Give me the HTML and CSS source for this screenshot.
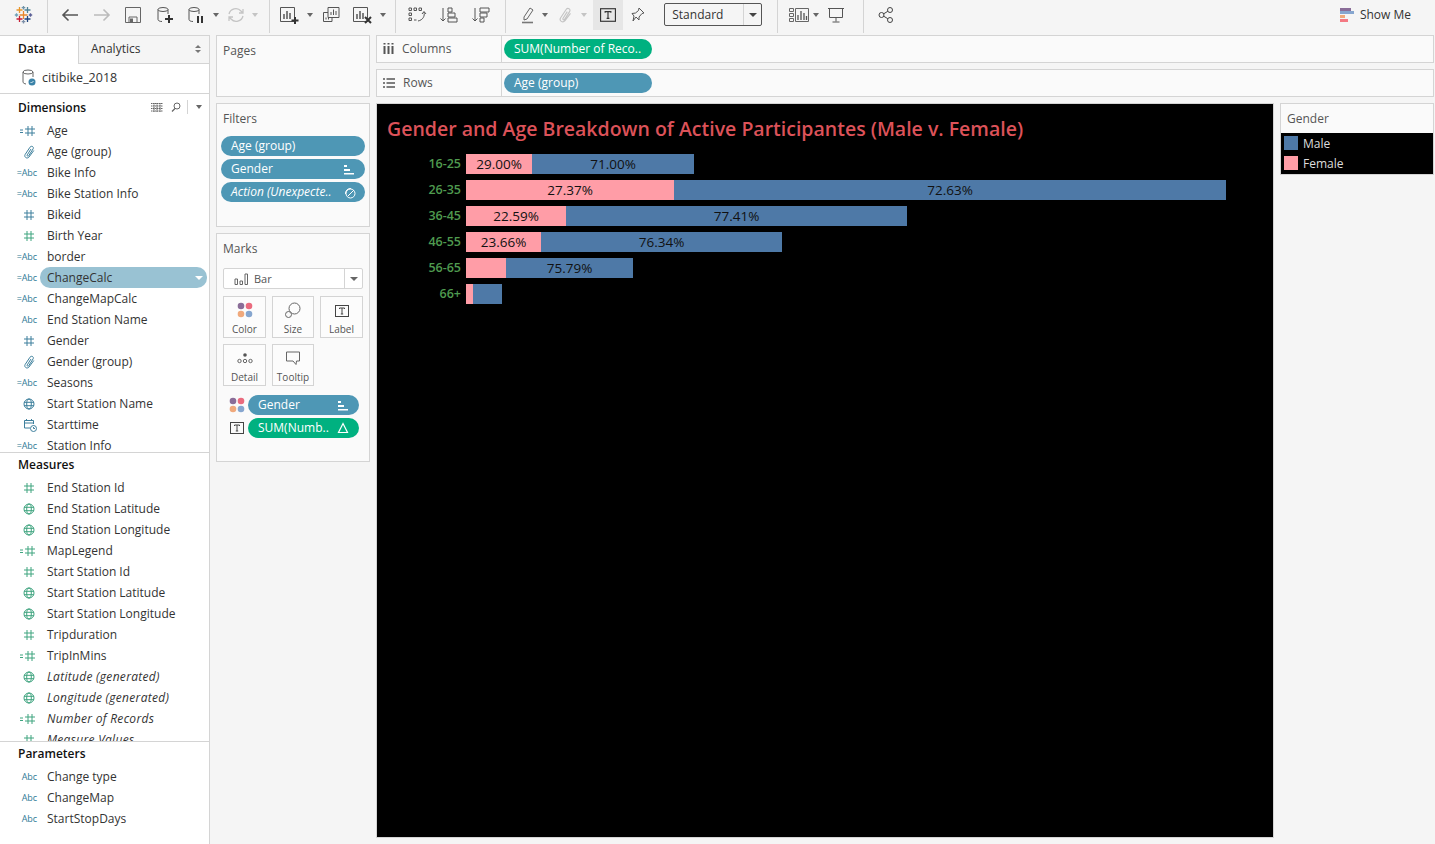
FILE: index.html
```html
<!DOCTYPE html>
<html lang="en">
<head>
    <meta charset="UTF-8">
    <title>Tableau - citibike_2018</title>
    <link rel="stylesheet" href="styles.css">
</head>
<body>
    <svg class="defs" width="0" height="0">
        <symbol id="hash" viewBox="0 0 12 12"><path d="M4 1v10M8 1v10M1 4h10M1 8h10" fill="none" stroke="currentColor"/></symbol>
        <symbol id="calchash" viewBox="0 0 15 12"><path d="M0 5h3M0 7.500h3M8 1v10M12 1v10M5 4h10M5 8h10" fill="none" stroke="currentColor"/></symbol>
        <symbol id="clip" viewBox="0 0 12 14"><path d="M8 4L4.300 9.800C3.600 11 5 11.800 5.800 10.600L10 4C11.400 1.800 8.400.2 7 2.200L2.200 9.400C.6 12 4 14.400 6 12L10.800 5.500" fill="none" stroke="currentColor"/></symbol>
        <symbol id="globe" viewBox="0 0 12 12"><g fill="none" stroke="currentColor"><circle cx="6" cy="6" r="5"/><ellipse cx="6" cy="6" rx="2.300" ry="5"/><path d="M1 4.300h10M1 7.700h10"/></g></symbol>
        <symbol id="cal" viewBox="0 0 14 14"><g fill="none" stroke="currentColor"><path d="M7 10H1.500V2.500h9V6M3.500 1v2M8.500 1v2M1.500 5h9"/><circle cx="10.500" cy="10.500" r="3"/><path d="M10.500 9v1.500h1.500"/></g></symbol>
        <symbol id="tbox" viewBox="0 0 14 14"><g fill="none" stroke="currentColor"><rect x=".5" y="1.500" width="13" height="11"/><path d="M4.500 5V4h5v1M7 4v6M5.800 10h2.400"/></g></symbol>
        <symbol id="sortbars" viewBox="0 0 12 12"><path d="M1 2h3v2H1zM1 6h6v2H1zM1 10h10v1.500H1z" fill="currentColor"/></symbol>
        <symbol id="dots" viewBox="0 0 16 16"><circle cx="4" cy="4" r="3.300" fill="#8a6d98"/><circle cx="12" cy="4" r="3.300" fill="#ea6b7e"/><circle cx="4" cy="12" r="3.300" fill="#f0a97c"/><circle cx="12" cy="12" r="3.300" fill="#86a6cf"/></symbol>
    </svg>

    <div class="toolbar">
        <div class="tgroup g-logo">
            <svg width="18" height="18" viewBox="0 0 18 18" fill="none" stroke-width="1.300">
                <path d="M8.500 5v8M4.500 9h8" stroke="#e8862b"/>
                <path d="M4.500 1v6M1.500 4h6" stroke="#e8962b"/>
                <path d="M12.500 1v6M9.500 4h6" stroke="#4f8296"/>
                <path d="M4.500 10v6M1.500 13h6" stroke="#c72037"/>
                <path d="M12.500 10v6M9.500 13h6" stroke="#1f447d"/>
                <path d="M8.500 0v3.500M6.700 1.700h3.600" stroke="#6f93a8"/>
                <path d="M8.500 14v3.500M6.700 15.700h3.600" stroke="#7c8fa8"/>
                <path d="M1.500 7.200v3.600M-.2 9h3.400" stroke="#6fa0b8"/>
                <path d="M15.500 7.200v3.600M13.800 9h3.400" stroke="#5a5f96"/>
            </svg>
        </div>
        <div class="tgroup g-nav">
            <span class="tool"><svg width="18" height="14" viewBox="0 0 18 14"><path d="M17 7H2M7.500 1.500L2 7l5.500 5.500" fill="none" stroke="#555" stroke-width="1.600"/></svg></span>
            <span class="tool"><svg width="18" height="14" viewBox="0 0 18 14"><path d="M1 7h15M10.500 1.500L16 7l-5.500 5.500" fill="none" stroke="#bbb" stroke-width="1.600"/></svg></span>
            <span class="tool"><svg width="16" height="16" viewBox="0 0 16 16"><path d="M.5.500h15v15H.5zM4 15.500V10h8v5.500" fill="none" stroke="#666"/><path d="M5 11.500h3V15H5z" fill="#666"/></svg></span>
            <span class="tool"><svg width="18" height="18" viewBox="0 0 18 18"><g fill="none" stroke="#555"><ellipse cx="7" cy="3.500" rx="5" ry="2"/><path d="M2 3.500v10c0 1 1.500 2 4 2M12 3.500V8"/></g><path d="M13 9v8M9 13h8" stroke="#333" stroke-width="2"/></svg></span>
            <span class="tool"><svg width="18" height="18" viewBox="0 0 18 18"><g fill="none" stroke="#555"><ellipse cx="7" cy="3.500" rx="5" ry="2"/><path d="M2 3.500v10c0 1 1.500 2 4 2M12 3.500V8"/></g><path d="M10 10h2v7h-2zM14 10h2v7h-2z" fill="#333"/></svg></span>
            <span class="caret"></span>
            <span class="tool"><svg width="18" height="16" viewBox="0 0 18 16"><path d="M2 7a7 7 0 0 1 12-3l2 2M16 9a7 7 0 0 1-12 3l-2-2M16 2v4h-4M2 14v-4h4" fill="none" stroke="#c4c4c4" stroke-width="1.300"/></svg></span>
            <span class="caret off"></span>
        </div>
        <div class="tgroup g-sheet">
            <span class="tool"><svg width="20" height="20" viewBox="0 0 20 20"><path d="M.5 2.500h14v14H.5z" fill="none" stroke="#555"/><path d="M4 14V9M7 14V6M10 14V8" stroke="#555" stroke-width="1.500"/><path d="M15 12v7M11.500 15.500h7" stroke="#333" stroke-width="2"/></svg></span>
            <span class="caret"></span>
            <span class="tool dup"><svg width="18" height="18" viewBox="0 0 18 18"><g fill="none" stroke="#555"><path d="M6 1.500h11v10H6z"/><path d="M6 6.500H1.500v9H10V11.500"/><path d="M9 9V6M11.500 9V3.500M14 9V5M4 13.500v-2M6.500 13.500V12"/></g></svg></span>
            <span class="tool dup"><svg width="20" height="20" viewBox="0 0 20 20"><path d="M.5 2.500h14v14H.5z" fill="none" stroke="#555"/><path d="M4 14V9M7 14V6M10 14V8" stroke="#555" stroke-width="1.500"/><path d="M12 12l6 6M18 12l-6 6" stroke="#333" stroke-width="2"/></svg></span>
            <span class="caret"></span>
        </div>
        <div class="tgroup g-sort">
            <span class="tool"><svg width="18" height="16" viewBox="0 0 18 16"><g fill="none" stroke="#555"><path d="M1 1h2.500v2.500H1zM6 1h2.500v2.500H6zM11 1h2.500v2.500H11zM1 6h2.500v2.500H1zM1 11h2.500v2.500H1zM6 13h2.500M16 5c1 4-1 8-6 9"/><path d="M14 7l2-2.500L18 7"/></g></svg></span>
            <span class="tool"><svg width="18" height="16" viewBox="0 0 18 16"><g fill="none" stroke="#555"><path d="M3 1v13M.5 11.500L3 14l2.500-2.500M8 1h4v4H8zM8 6h7v4H8zM8 11h9v4H8z"/></g></svg></span>
            <span class="tool dup"><svg width="18" height="16" viewBox="0 0 18 16"><g fill="none" stroke="#555"><path d="M3 1v13M.5 11.500L3 14l2.500-2.500M8 1h9v4H8zM8 6h7v4H8zM8 11h4v4H8z"/></g></svg></span>
        </div>
        <div class="tgroup g-mark">
            <span class="tool"><svg width="14" height="18" viewBox="0 0 14 18"><path d="M3 11l6-9 3 2-6 9-3 1z" fill="none" stroke="#666"/><path d="M1 16.500h11" stroke="#777" stroke-width="1.600"/></svg></span>
            <span class="caret tight"></span>
            <span class="tool"><svg width="14" height="16" color="#c4c4c4"><use href="#clip"/></svg></span>
            <span class="caret off"></span>
            <span class="tool tbtn"><svg width="16" height="16" color="#333"><use href="#tbox"/></svg></span>
            <span class="tool pin"><svg width="14" height="16" viewBox="0 0 14 16"><path d="M8 1l5 5-2 .5-3 3.500v3L5 10l-3 4 1-5-2-2.500 3.500-.5 3-2.500z" fill="none" stroke="#555"/></svg></span>
            <span class="select">Standard<i></i></span>
        </div>
        <div class="tgroup g-view">
            <span class="tool"><svg width="20" height="14" viewBox="0 0 20 14"><g fill="none" stroke="#666"><path d="M.5.500h4v3h-4zM.5 5.500h4v3h-4zM.5 10.500h4v3h-4zM6.500.500h13v13h-13z"/></g><path d="M9 12V7M12 12V3M15 12V5M17.500 12V8" stroke="#555" stroke-width="1.300"/></svg></span>
            <span class="caret tight"></span>
            <span class="tool"><svg width="18" height="16" viewBox="0 0 18 16"><path d="M1 1.500h16M2.500 1.500v9h13v-9M9 10.500v4M5.500 15h7" fill="none" stroke="#555"/></svg></span>
        </div>
        <div class="tgroup g-share">
            <span class="tool"><svg width="16" height="16" viewBox="0 0 16 16"><g fill="none" stroke="#444"><circle cx="3.500" cy="8" r="2.500"/><circle cx="12" cy="3" r="2.500"/><circle cx="12" cy="13" r="2.500"/><path d="M5.700 6.800l4.100-2.500M5.700 9.200l4.100 2.500"/></g></svg></span>
        </div>
        <div class="showme">
            <svg width="14" height="16" viewBox="0 0 14 16"><path d="M0 1h11v3H0z" fill="#8a6d98"/><path d="M0 4h14v3H0z" fill="#86a6cf"/><path d="M0 8h5v3H0z" fill="#f0a97c"/><path d="M0 12h8v3H0z" fill="#f47983"/></svg>
            <span>Show Me</span>
        </div>
    </div>

    <div class="workspace">
        <div class="sidebar">
            <div class="tabs">
                <div class="tab active">Data</div>
                <div class="tab">Analytics<i class="updown"></i></div>
            </div>
            <div class="source">
                <svg width="14" height="17" viewBox="0 0 14 17"><g fill="none" stroke="#666"><ellipse cx="6" cy="3" rx="5" ry="2"/><path d="M1 3v10c0 1 1.500 1.800 3 2M11 3v5"/></g><circle cx="10" cy="13" r="3.500" fill="#3b83a8"/><path d="M8.500 13l1 1 2-2" fill="none" stroke="#fff" stroke-width=".8"/></svg>
                <span>citibike_2018</span>
            </div>
            <div class="sec-dim">
                <div class="sec-head">Dimensions
                    <span class="sec-tools">
                        <svg width="12" height="9" viewBox="0 0 12 9"><path d="M0 .5h12M0 3h12M0 5.500h12M0 8h12M3 0v9M6 0v9M9 0v9" stroke="#666" stroke-dasharray="1.500 .5" fill="none"/></svg>
                        <svg width="10" height="10" viewBox="0 0 10 10"><circle cx="6" cy="4" r="3" fill="none" stroke="#666"/><path d="M4 6.500L1 9.500" stroke="#666" stroke-width="1.300"/></svg>
                        <span class="sep"></span>
                        <i class="caret-i"></i>
                    </span>
                </div>
                <div class="fields" id="dims"></div>
            </div>
            <div class="sec-mea">
                <div class="sec-head">Measures</div>
                <div class="fields" id="meas"></div>
            </div>
            <div class="sec-par">
                <div class="sec-head">Parameters</div>
                <div class="fields" id="pars"></div>
            </div>
        </div>

        <div class="cards">
            <div class="card card-pages"><div class="card-title">Pages</div></div>
            <div class="card card-filters">
                <div class="card-title">Filters</div>
                <div class="pill blue">Age (group)</div>
                <div class="pill blue">Gender<svg width="12" height="12" color="#fff"><use href="#sortbars"/></svg></div>
                <div class="pill blue ital">Action (Unexpecte..<svg width="13" height="13" viewBox="0 0 13 13"><g fill="none" stroke="#fff"><circle cx="7.500" cy="7.500" r="4.500"/><path d="M5 10l6-6M2.500 8A5 5 0 0 1 8 2.500"/></g></svg></div>
            </div>
            <div class="card card-marks">
                <div class="card-title">Marks</div>
                <div class="marktype">
                    <svg width="14" height="12" viewBox="0 0 14 12"><path d="M1 6h2.500v5.500H1zM6 8h2.500v3.500H6zM11 1h2.500v10.500H11z" fill="none" stroke="#666"/></svg>
                    <span>Bar</span><i></i>
                </div>
                <div class="markgrid">
                    <div class="markbtn"><svg width="16" height="16"><use href="#dots"/></svg>Color</div>
                    <div class="markbtn"><svg width="16" height="16" viewBox="0 0 16 16"><g fill="none" stroke="#666"><circle cx="9.500" cy="6.500" r="5.500"/><circle cx="3.500" cy="12.500" r="3" fill="#fafafa"/></g></svg>Size</div>
                    <div class="markbtn"><svg width="14" height="14" color="#444"><use href="#tbox"/></svg>Label</div>
                    <div class="markbtn"><svg width="16" height="16" viewBox="0 0 16 16"><circle cx="8" cy="5" r="1.800" fill="#555"/><g fill="none" stroke="#666"><circle cx="2.500" cy="11" r="1.700"/><circle cx="8" cy="11" r="1.700"/><circle cx="13.500" cy="11" r="1.700"/></g></svg>Detail</div>
                    <div class="markbtn"><svg width="16" height="16" viewBox="0 0 16 16"><path d="M1.500 2h13v9h-3l-.5 3.500L8 11H1.500z" fill="none" stroke="#666"/></svg>Tooltip</div>
                </div>
                <div class="markrow">
                    <svg width="16" height="16"><use href="#dots"/></svg>
                    <div class="pill blue">Gender<svg width="12" height="12" color="#fff"><use href="#sortbars"/></svg></div>
                </div>
                <div class="markrow">
                    <svg width="14" height="14" color="#444"><use href="#tbox"/></svg>
                    <div class="pill green">SUM(Numb..<svg width="12" height="12" viewBox="0 0 12 12"><path d="M6 1.500l4.500 9h-9z" fill="none" stroke="#fff" stroke-width="1.200"/></svg></div>
                </div>
            </div>
        </div>

        <div class="center">
            <div class="shelf">
                <div class="shelf-label"><svg width="11" height="11" viewBox="0 0 11 11"><path d="M1.500 3v8M5.500 3v8M9.500 3v8M1.500 0v1.500M5.500 0v1.500M9.500 0v1.500" stroke="#555" stroke-width="2"/></svg>Columns</div>
                <div class="pill green shelf-pill">SUM(Number of Reco..</div>
            </div>
            <div class="shelf">
                <div class="shelf-label"><svg width="12" height="10" viewBox="0 0 12 10"><path d="M0 1h2M3.500 1H12M0 5h2M3.500 5H12M0 9h2M3.500 9H12" stroke="#555" stroke-width="1.400"/></svg>Rows</div>
                <div class="pill blue shelf-pill">Age (group)</div>
            </div>
            <div class="viewrow">
                <div class="view">
                    <div class="viz-title">Gender and Age Breakdown of Active Participantes (Male v. Female)</div>
                    <div class="chart" id="chart"></div>
                </div>
                <div class="legend">
                    <div class="legend-title">Gender</div>
                    <div class="legend-body">
                        <div class="legend-row"><span class="sw male"></span>Male</div>
                        <div class="legend-row"><span class="sw female"></span>Female</div>
                    </div>
                </div>
            </div>
        </div>
    </div>

    <script>
        const icons = {
            calchash: '<svg width="15" height="12"><use href="#calchash"/></svg>',
            hash: '<svg width="12" height="12"><use href="#hash"/></svg>',
            clip: '<svg width="12" height="14"><use href="#clip"/></svg>',
            globe: '<svg width="12" height="12"><use href="#globe"/></svg>',
            cal: '<svg class="ic-cal" width="14" height="14"><use href="#cal"/></svg>',
            abc: '<span class="abc">Abc</span>',
            cabc: '<span class="abc">=Abc</span>'
        };

        function fieldRows(el, list, cls) {
            el.innerHTML = list.map(f => {
                let c = "field " + cls;
                if (f[2] == "sel") c += " selected";
                if (f[2] == "it") c += " italic";
                if (f[2] == "g") c += " measure";
                return '<div class="' + c + '"><span class="ficon">' + icons[f[0]] + '</span><span class="fname">' + f[1] + '</span>' + (f[2] == "sel" ? "<i></i>" : "") + '</div>';
            }).join("");
        }

        fieldRows(document.getElementById("dims"), [
            ["calchash", "Age"], ["clip", "Age (group)"], ["cabc", "Bike Info"], ["cabc", "Bike Station Info"],
            ["hash", "Bikeid"], ["hash", "Birth Year", "g"], ["cabc", "border"], ["cabc", "ChangeCalc", "sel"],
            ["cabc", "ChangeMapCalc"], ["abc", "End Station Name"], ["hash", "Gender"], ["clip", "Gender (group)"],
            ["cabc", "Seasons"], ["globe", "Start Station Name"], ["cal", "Starttime"], ["cabc", "Station Info"]
        ], "");

        fieldRows(document.getElementById("meas"), [
            ["hash", "End Station Id"], ["globe", "End Station Latitude"], ["globe", "End Station Longitude"],
            ["calchash", "MapLegend"], ["hash", "Start Station Id"], ["globe", "Start Station Latitude"],
            ["globe", "Start Station Longitude"], ["hash", "Tripduration"], ["calchash", "TripInMins"],
            ["globe", "Latitude (generated)", "it"], ["globe", "Longitude (generated)", "it"],
            ["calchash", "Number of Records", "it"], ["hash", "Measure Values", "it"]
        ], "measure");

        fieldRows(document.getElementById("pars"), [
            ["abc", "Change type"], ["abc", "ChangeMap"], ["abc", "StartStopDays"]
        ], "");

        const rows = [
            ["16-25", 66, 162, "29.00%", "71.00%"],
            ["26-35", 208, 552, "27.37%", "72.63%"],
            ["36-45", 100, 341, "22.59%", "77.41%"],
            ["46-55", 75, 241, "23.66%", "76.34%"],
            ["56-65", 40, 127, "", "75.79%"],
            ["66+", 7, 29, "", ""]
        ];
        document.getElementById("chart").innerHTML = rows.map(r =>
            '<div class="bar-row"><div class="bar-label">' + r[0] + '</div>' +
            '<div class="bar female" style="width:' + r[1] + 'px">' + r[3] + '</div>' +
            '<div class="bar male" style="width:' + r[2] + 'px">' + r[4] + '</div></div>'
        ).join("");
    </script>
</body>
</html>
```
FILE: styles.css
```css
* {
    box-sizing: border-box;
}
body {
    margin: 0;
    height: 844px;
    overflow: hidden;
    background-color: #f5f5f5;
    color: #333;
    font-family: "Open Sans", sans-serif;
    font-size: 12px;
    display: flex;
    flex-direction: column;
}
.defs {
    position: absolute;
}
svg {
    flex: none;
    display: block;
    overflow: visible;
}

/* toolbar */
.toolbar {
    height: 35px;
    display: flex;
    flex: none;
    align-items: flex-start;
}
.tgroup {
    height: 33px;
    display: flex;
    align-items: flex-start;
    border-right: 1px solid #d4d4d4;
}
.g-logo { width: 48px; padding: 6px 0 0 15px; }
.g-nav { width: 222px; padding-left: 6.25px; }
.g-sheet { width: 126px; padding-left: 4.25px; }
.g-sort { width: 110px; padding-left: 5.25px; }
.g-mark { width: 272px; padding-left: 6.25px; }
.g-view { width: 86px; padding-left: 5.25px; }
.g-share { width: 60px; padding-left: 6.25px; border-right: 0; }
.tool {
    width: 31.5px;
    height: 30px;
    display: flex;
    align-items: center;
    justify-content: center;
    flex: none;
}
.dup { margin-left: 1px; }
.caret {
    width: 8px;
    flex: none;
    height: 4px;
    margin-top: 13px;
}
.caret::after {
    content: "";
    display: block;
    margin: 0 auto;
    width: 0;
    border: 3px solid transparent;
    border-top: 4px solid #666;
    border-bottom: 0;
}
.caret.off::after { border-top-color: #c4c4c4; }
.caret.tight { margin-left: -3px; }
.tbtn {
    width: 30px;
    margin-left: 5px;
    background-color: #e6e6e6;
}
.pin { width: 29px; }
.select {
    width: 98px;
    height: 23px;
    margin: 3px 0 0 12px;
    border: 1px solid #555;
    border-radius: 2px;
    padding-left: 7px;
    line-height: 22px;
    position: relative;
    background-color: #f5f5f5;
}
.select i {
    position: absolute;
    right: 0;
    top: 0;
    width: 18px;
    height: 21px;
    border-left: 1px solid #d4d4d4;
}
.select i::after,
.marktype i::after {
    content: "";
    position: absolute;
    left: 5px;
    top: 9px;
    border: 4px solid transparent;
    border-top: 4px solid #444;
    border-bottom: 0;
}
.showme {
    margin-left: auto;
    height: 29px;
    padding-right: 24px;
    display: flex;
    align-items: center;
    gap: 6px;
}

/* left data pane */
.workspace {
    flex: 1;
    display: flex;
    min-height: 0;
}
.sidebar {
    width: 210px;
    flex: none;
    background-color: #fff;
    border-right: 1px solid #d4d4d4;
    display: flex;
    flex-direction: column;
}
.tabs {
    height: 29px;
    display: flex;
    flex: none;
}
.tab {
    flex: 1;
    padding: 4px 0 0 12px;
    background-color: #f5f5f5;
    border-bottom: 1px solid #d4d4d4;
    border-top: 1px solid #d4d4d4;
    position: relative;
}
.tab.active {
    flex: none;
    width: 79px;
    padding-left: 18px;
    font-weight: 600;
    color: #111;
    background-color: #fff;
    border-bottom: 0;
    border-right: 1px solid #d4d4d4;
}
.updown {
    position: absolute;
    right: 8px;
    top: 9px;
    border: 3px solid transparent;
    border-bottom: 3px solid #777;
    border-top: 0;
}
.updown::after {
    content: "";
    position: absolute;
    left: -3px;
    top: 5px;
    border: 3px solid transparent;
    border-top: 3px solid #777;
    border-bottom: 0;
}
.source {
    height: 30px;
    flex: none;
    display: flex;
    align-items: center;
    gap: 6px;
    padding: 0 0 2px 22px;
    border-bottom: 1px solid #d4d4d4;
    font-size: 12.500px;
}
.sec-dim { height: 359px; flex: none; overflow: hidden; border-bottom: 1px solid #d4d4d4; }
.sec-mea { height: 289px; flex: none; overflow: hidden; border-bottom: 1px solid #d4d4d4; }
.sec-par { flex: 1; }
.sec-head {
    height: 24px;
    padding: 3px 0 0 18px;
    font-weight: 600;
    color: #111;
    position: relative;
}
.sec-dim .sec-head { height: 26px; padding-top: 5px; }
.sec-tools {
    position: absolute;
    right: 7px;
    top: 6px;
    display: flex;
    align-items: center;
    gap: 8px;
}
.sep {
    width: 1px;
    height: 14px;
    margin-left: -2px;
    background-color: #d4d4d4;
}
.caret-i {
    border: 3.500px solid transparent;
    border-top: 4px solid #666;
    border-bottom: 0;
}
.field {
    height: 21px;
    display: flex;
    align-items: center;
    position: relative;
}
.ficon {
    width: 47px;
    padding-right: 10px;
    display: flex;
    justify-content: flex-end;
    color: #3d7f9c;
    flex: none;
}
.ficon svg { margin-right: 2px; }
.ficon .ic-cal { margin-right: 0; }
.measure .ficon { color: #3fa47f; }
.abc {
    font-size: 9px;
    color: #2f7a96;
    letter-spacing: -.1px;
}
.italic .fname {
    font-style: italic;
    letter-spacing: .3px;
}
.selected::before {
    content: "";
    position: absolute;
    left: 40px;
    right: 2px;
    top: 0;
    bottom: 0;
    background-color: #99c2d3;
    border-radius: 10px;
}
.fname { position: relative; }
.selected i {
    position: absolute;
    right: 6px;
    top: 9px;
    border: 4px solid transparent;
    border-top: 4px solid #fff;
    border-bottom: 0;
}

/* pages, filters, marks */
.cards {
    width: 154px;
    margin-left: 6px;
    flex: none;
    display: flex;
    flex-direction: column;
    gap: 6px;
}
.card {
    background-color: #fafafa;
    border: 1px solid #d4d4d4;
    padding: 0 4px;
}
.card-pages { height: 62px; }
.card-filters { height: 124px; }
.card-marks { height: 229px; }
.card-title {
    height: 31px;
    padding: 6px 2px 0;
    color: #555;
}
.card-filters .card-title { height: 32px; }
.pill {
    height: 20px;
    border-radius: 10px;
    color: #fff;
    line-height: 20px;
    padding: 0 10px;
    display: flex;
    align-items: center;
    justify-content: space-between;
    white-space: nowrap;
}
.pill.blue { background-color: #4e97b5; }
.pill.green { background-color: #00b180; }
.pill.ital { font-style: italic; padding-right: 9px; }
.card-filters .pill { margin-bottom: 3px; }
.marktype {
    height: 21px;
    margin: 3px 2px 7px;
    border: 1px solid #d4d4d4;
    background-color: #fff;
    border-radius: 2px;
    display: flex;
    align-items: center;
    gap: 6px;
    padding-left: 10px;
    font-size: 11px;
    position: relative;
    color: #555;
}
.marktype i {
    position: absolute;
    right: 0;
    top: 0;
    width: 18px;
    height: 19px;
    border-left: 1px solid #d4d4d4;
}
.marktype i::after { top: 8px; border-top-color: #666; }
.markgrid {
    display: grid;
    grid-template-columns: 43px 42px 43px;
    column-gap: 6px;
    row-gap: 6px;
    margin: 0 2px;
}
.markbtn {
    height: 42px;
    border: 1px solid #d4d4d4;
    background-color: #fcfcfc;
    display: flex;
    flex-direction: column;
    align-items: center;
    justify-content: flex-end;
    gap: 4px;
    padding-bottom: 1px;
    font-size: 10px;
    color: #555;
}
.markrow {
    display: flex;
    align-items: center;
    margin: 3px 6px 3px 8px;
    height: 20px;
    gap: 2px;
}
.markgrid + .markrow { margin-top: 9px; }
.markrow svg { width: 16px; }
.markrow .pill { flex: 1; margin-left: 1px; }
.markrow .pill svg { width: 12px; }

/* shelves and view */
.center {
    flex: 1;
    margin: 0 0 6px 6px;
    padding-right: 1px;
    display: flex;
    flex-direction: column;
    gap: 6px;
    min-width: 0;
}
.shelf {
    height: 28px;
    flex: none;
    display: flex;
    align-items: center;
    background-color: #fafafa;
    border: 1px solid #d4d4d4;
}
.shelf-label {
    width: 125px;
    height: 100%;
    padding: 0 0 1px 6px;
    display: flex;
    align-items: center;
    gap: 8px;
    border-right: 1px solid #d4d4d4;
    color: #555;
}
.shelf-pill {
    width: 148px;
    margin-left: 2px;
}
.viewrow {
    flex: 1;
    display: flex;
    gap: 6px;
    min-height: 0;
}
.view {
    width: 898px;
    background-color: #000;
    border: 1px solid #d4d4d4;
    padding: 11px 0 0 10px;
}
.viz-title {
    color: #dc5259;
    font-size: 19.500px;
    font-weight: 600;
    height: 39px;
    white-space: nowrap;
}
.bar-row {
    display: flex;
    height: 20px;
    margin-bottom: 6px;
    color: #111;
}
.bar-label {
    width: 74px;
    margin-right: 5px;
    text-align: right;
    color: #4f9a4f;
    font-weight: 600;
    font-size: 12.500px;
    line-height: 20px;
}
.bar {
    line-height: 20px;
    text-align: center;
    font-size: 13.500px;
}
.bar.female { background-color: #ff9da7; }
.bar.male { background-color: #4e79a7; }
.legend {
    width: 154px;
    height: 72px;
    flex: none;
    background-color: #fafafa;
    border: 1px solid #d4d4d4;
}
.legend-title {
    height: 29px;
    padding: 6px 6px 0;
    color: #555;
}
.legend-body {
    height: 41px;
    background-color: #000;
    color: #ddd;
}
.legend-row {
    height: 20px;
    display: flex;
    align-items: center;
    gap: 5px;
    padding-left: 3px;
}
.sw {
    width: 14px;
    height: 14px;
}
.sw.male { background-color: #4e79a7; }
.sw.female { background-color: #ff9da7; }
```
